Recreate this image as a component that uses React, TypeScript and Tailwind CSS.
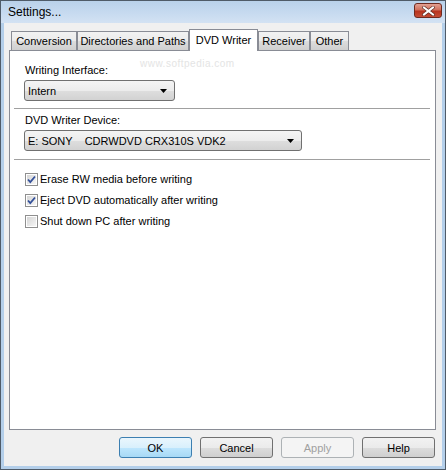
import { ReactNode } from 'react';

const tabs = [
  { label: 'Conversion', w: 'w-[66px]' },
  { label: 'Directories and Paths', w: 'w-[112px]' },
  { label: 'DVD Writer', w: 'w-[69px]', active: true },
  { label: 'Receiver', w: 'w-[52px]' },
  { label: 'Other', w: 'w-[39px]' },
];

const options = [
  { label: 'Erase RW media before writing', checked: true },
  { label: 'Eject DVD automatically after writing', checked: true },
  { label: 'Shut down PC after writing', checked: false },
];

function Combo({ width, children }: { width: string; children: ReactNode }) {
  return (
    <div
      className={`${width} h-[21px] flex items-center justify-between pl-[3px] pr-[7px] rounded-[3px] border border-[#707070] bg-[linear-gradient(#f4f4f4,#ececec_50%,#dedede_51%,#d2d2d2)] whitespace-pre`}
    >
      <span>{children}</span>
      <svg width="7" height="4" viewBox="0 0 7 4">
        <path d="M0 0h7L3.5 4z" fill="#000" />
      </svg>
    </div>
  );
}

function Checkbox({ checked }: { checked: boolean }) {
  return (
    <div className="w-[13px] h-[13px] border border-[#8f8f8f] bg-white p-[1px]">
      <div className="w-full h-full bg-[linear-gradient(135deg,#d5d5d5,#f6f6f6)] flex items-center justify-center">
        {checked && (
          <svg width="9" height="9" viewBox="0 0 9 9">
            <path d="M1 4.5l2.3 2.6L8 1.5" stroke="#33509a" strokeWidth="1.8" fill="none" />
          </svg>
        )}
      </div>
    </div>
  );
}

function Btn({ label, variant }: { label: string; variant?: 'default' | 'disabled' }) {
  const look =
    variant === 'default'
      ? 'border-[#3c7fb1] bg-[linear-gradient(#eaf6fd,#d9f0fc_50%,#bee6fd_51%,#a7d9f5)] text-black'
      : variant === 'disabled'
      ? 'border-[#adb2b5] bg-[#f4f4f4] text-[#a0a0a0]'
      : 'border-[#707070] bg-[linear-gradient(#f2f2f2,#ebebeb_50%,#dddddd_51%,#cfcfcf)] text-black';
  return (
    <div className={`w-[73px] h-[21px] rounded-[3px] border flex items-center justify-center ${look}`}>
      {label}
    </div>
  );
}

export default function App() {
  return (
    <div className="w-[446px] h-[470px] flex flex-col border border-[#4f5b68] bg-[#b4cfea] font-['Liberation_Sans',Arial,sans-serif] text-[11px] leading-[14px] text-black">
      {/* title bar */}
      <div className="h-[22px] flex items-center justify-between pl-[7px] pr-[3px] bg-[linear-gradient(#b9d1ea,#c8dbf0_60%,#d3e2f3)]">
        <span className="text-[12px] text-black">Settings...</span>
        <div className="w-[28px] h-[15px] mt-[-3px] rounded-[3px] border border-[#6e2a20] bg-[linear-gradient(#e3a193,#d0705d_45%,#b8341f_55%,#c44d36)] flex items-center justify-center">
          <svg width="13" height="10" viewBox="0 0 13 10">
            <path d="M2 1.5l9 7M11 1.5l-9 7" stroke="#5a2a22" strokeWidth="3.4" strokeLinecap="square" />
            <path d="M2 1.5l9 7M11 1.5l-9 7" stroke="#fff" strokeWidth="2" strokeLinecap="square" />
          </svg>
        </div>
      </div>

      {/* body */}
      <div className="flex-1 mx-[3px] mb-[3px] bg-[#f0f0f0] pt-[6px] pl-[5px] pr-[6px] flex flex-col">
        <div className="relative z-10 flex items-end h-[22px] pl-[2px]">
          {tabs.map(t =>
            t.active ? (
              <div
                key={t.label}
                className={`${t.w} h-[22px] border border-b-0 border-[#898c95] bg-white flex items-center justify-center pb-[2px]`}
              >
                {t.label}
              </div>
            ) : (
              <div
                key={t.label}
                className={`${t.w} h-[19px] mb-[1px] border border-[#898c95] border-b-0 bg-[linear-gradient(#f2f2f2,#ebebeb_50%,#dddddd_51%,#cfcfcf)] flex items-center justify-center`}
              >
                {t.label}
              </div>
            )
          )}
        </div>

        <div className="relative mt-[-1px] h-[380px] border border-[#898c95] bg-white pl-[4px] pr-[5px] flex flex-col">
          <span className="absolute left-[130px] top-[6px] text-[10px] text-[#e4e4e4] tracking-[0.5px]">
            www.softpedia.com
          </span>

          <div className="pl-[10px] pt-[12px] flex flex-col">
            <span className="pl-[1px]">Writing Interface:</span>
            <div className="mt-[3px]">
              <Combo width="w-[151px]">Intern</Combo>
            </div>
          </div>
          <div className="mt-[7px] h-px bg-[#a0a0a0]" />

          <div className="pl-[10px] pt-[4px] flex flex-col">
            <span className="pl-[1px]">DVD Writer Device:</span>
            <div className="mt-[3px]">
              <Combo width="w-[278px]">{'E: SONY    CDRWDVD CRX310S VDK2'}</Combo>
            </div>
          </div>
          <div className="mt-[8px] h-px bg-[#a0a0a0]" />

          <div className="pl-[11px] pt-[12px] flex flex-col gap-[7px]">
            {options.map(o => (
              <div key={o.label} className="h-[14px] flex items-center gap-[2px]">
                <Checkbox checked={o.checked} />
                <span>{o.label}</span>
              </div>
            ))}
          </div>
        </div>

        <div className="mt-[7px] flex justify-end gap-[8px] pr-[1px]">
          <Btn label="OK" variant="default" />
          <Btn label="Cancel" />
          <Btn label="Apply" variant="disabled" />
          <Btn label="Help" />
        </div>
      </div>
    </div>
  );
}
